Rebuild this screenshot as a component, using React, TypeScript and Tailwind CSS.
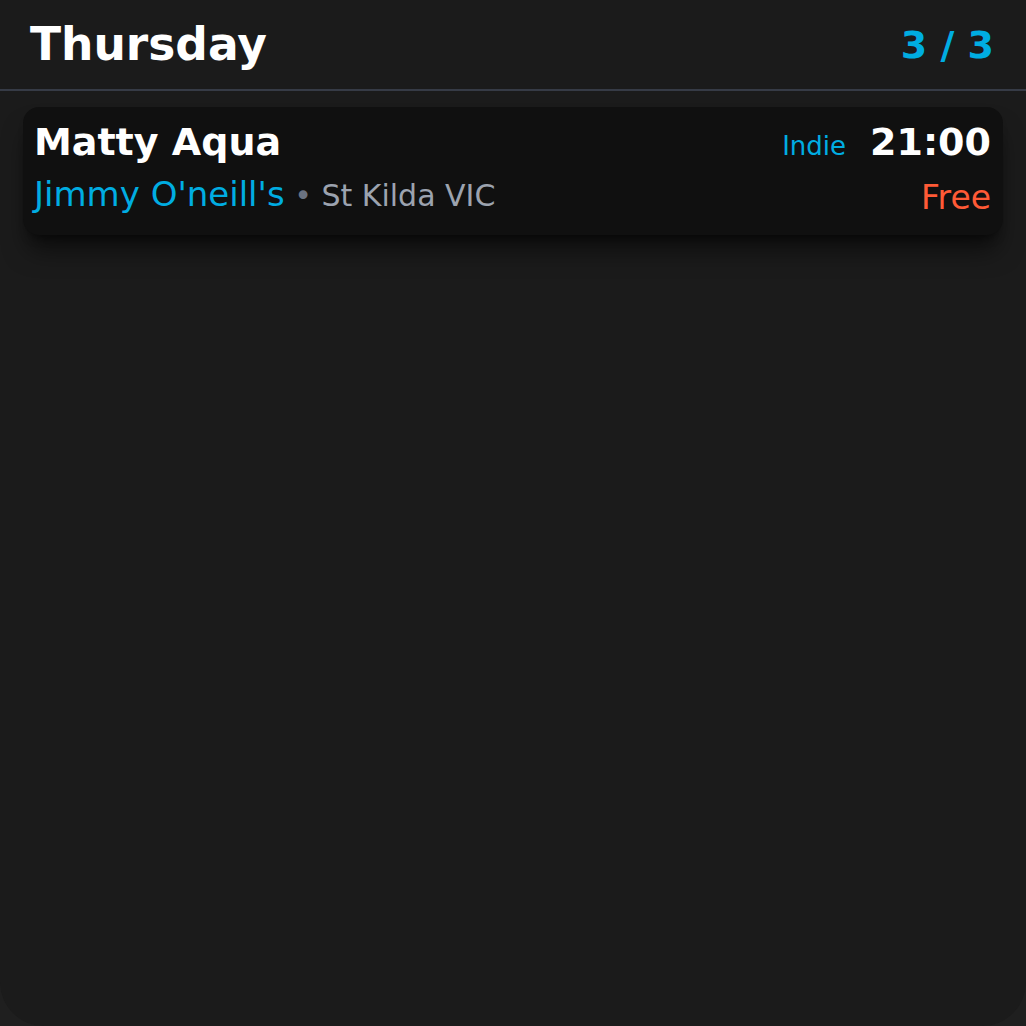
import React from 'react';

const font = { fontFamily: '"DejaVu Sans", "Liberation Sans", sans-serif' };

export default function App() {
  return (
    <div className="w-full h-[1026px] bg-[#1f1f1f]" style={font}>
      <div className="h-full bg-[#1b1b1b] rounded-b-[44px] flex flex-col">
        {/* Header */}
        <div className="h-[91px] flex items-center justify-between pl-[30px] pr-[32px] border-b-2 border-[#363b46]">
          <h1 className="text-[45.5px] leading-none font-bold text-white">Thursday</h1>
          <span className="text-[38px] leading-none font-bold text-[#00ade2]">3 / 3</span>
        </div>

        {/* Gig card */}
        <div className="mx-[23px] mt-[16px] h-[128px] rounded-2xl bg-[#101010] pl-[11px] pr-3 pt-[16px] flex justify-between shadow-xl shadow-black/50">
          <div className="flex flex-col gap-[16px]">
            <div className="text-[38px] leading-none font-bold text-white">Matty Aqua</div>
            <div className="flex items-baseline whitespace-pre">
              <span className="text-[34px] leading-none text-[#00ade2]">Jimmy O'neill's</span>
              <span className="text-[30px] leading-none text-[#9ca3af]">
                {' '}
                <span className="text-[#6b7280]">•</span> St Kilda VIC
              </span>
            </div>
          </div>
          <div className="flex flex-col items-end gap-[20px]">
            <div className="flex items-baseline gap-[24px]">
              <span className="text-[26px] leading-none text-[#00ade2]">Indie</span>
              <span className="text-[38px] leading-none font-bold text-white">21:00</span>
            </div>
            <span className="text-[33px] leading-none text-[#ff5a36]">Free</span>
          </div>
        </div>
      </div>
    </div>
  );
}
